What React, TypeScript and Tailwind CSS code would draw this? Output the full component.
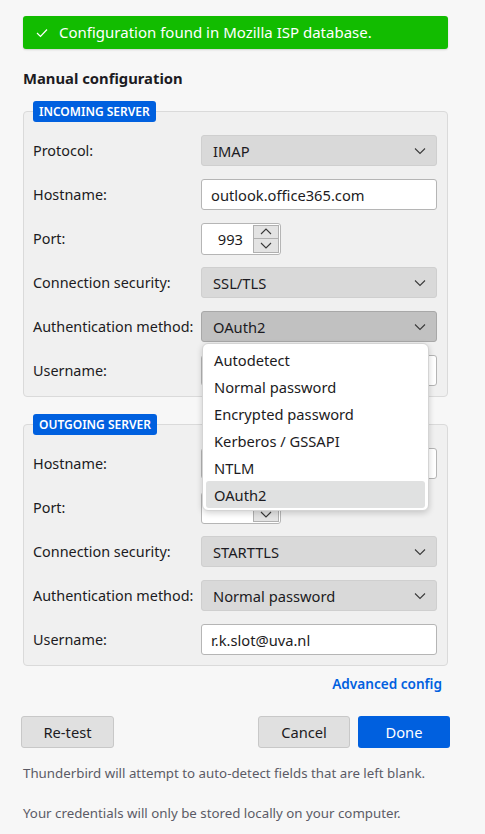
import React from "react";

const font = { fontFamily: '"Noto Sans", "Open Sans", sans-serif' };

function Chevron({ className = "" }: { className?: string }) {
  return (
    <svg width="12" height="8" viewBox="0 0 12 8" className={className}>
      <path d="M1 1.5 L6 6.5 L11 1.5" fill="none" stroke="#3a3a3a" strokeWidth="1.1" />
    </svg>
  );
}

function Select({ value, active = false }: { value: string; active?: boolean }) {
  return (
    <div
      className={`flex h-[31px] w-[236px] items-center justify-between rounded-[3px] border pl-[11px] pr-[10px] text-[14.7px] text-[#1c1b22] ${
        active ? "border-[#a8a8a8] bg-[#c1c1c1]" : "border-[#cfcfcf] bg-[#d9d9d9]"
      }`}
    >
      <span>{value}</span>
      <Chevron />
    </div>
  );
}

function TextInput({ value }: { value: string }) {
  return (
    <div className="flex h-[31px] w-[236px] items-center rounded-[3px] border border-[#b5b5b5] bg-white pl-[9px] text-[14.7px] text-[#1c1b22]">
      {value}
    </div>
  );
}

function PortInput({ value }: { value: string }) {
  return (
    <div className="flex h-[32px] w-[80px] overflow-hidden rounded-[3px] border border-[#b5b5b5] bg-white">
      <div className="flex flex-1 items-center justify-end pr-[10px] text-[14.7px] text-[#1c1b22]">{value}</div>
      <div className="my-[1px] mr-[1px] flex w-[26px] flex-col">
        <div className="flex flex-1 items-center justify-center border border-[#b0b0b0] bg-[#e3e3e3]">
          <svg width="12" height="7" viewBox="0 0 12 7">
            <path d="M1 6 L6 1 L11 6" fill="none" stroke="#3a3a3a" strokeWidth="1.1" />
          </svg>
        </div>
        <div className="flex flex-1 items-center justify-center border border-t-0 border-[#b0b0b0] bg-[#e3e3e3]">
          <svg width="12" height="7" viewBox="0 0 12 7">
            <path d="M1 1 L6 6 L11 1" fill="none" stroke="#3a3a3a" strokeWidth="1.1" />
          </svg>
        </div>
      </div>
    </div>
  );
}

function Row({ label, children }: { label: string; children: React.ReactNode }) {
  return (
    <div className="relative flex h-[31px] items-center">
      <div className="w-[168px] text-[14.4px] text-[#1c1b22]">{label}</div>
      {children}
    </div>
  );
}

function Fieldset({ title, children }: { title: string; children: React.ReactNode }) {
  return (
    <div className="relative rounded-[4px] border border-[#dadada] bg-[#f0f0f0] pb-[10px] pl-[9px] pr-[9px] pt-[23px]">
      <div className="absolute left-[9px] top-[-11px] flex h-[21px] items-center rounded-[3px] bg-[#0060df] px-[6px] text-[12px] font-semibold text-white">
        {title}
      </div>
      <div className="flex flex-col gap-[13px]">{children}</div>
    </div>
  );
}

const menuItems = ["Autodetect", "Normal password", "Encrypted password", "Kerberos / GSSAPI", "NTLM", "OAuth2"];

export default function App() {
  return (
    <div className="min-h-[834px] w-[485px] bg-[#f7f7f7]" style={font}>
      <div className="pl-[23px] pr-[37px] pt-[16px]">
        <div className="flex h-[33px] items-center rounded-[3px] bg-[#12bc00] pl-[13px] text-[15px] text-white shadow-[0_1px_2px_rgba(0,0,0,0.15)]">
          <svg width="12" height="10" viewBox="0 0 12 10" className="mr-[11px]">
            <path d="M1 5 L4.5 8.5 L11 1.5" fill="none" stroke="white" strokeWidth="1.2" />
          </svg>
          Configuration found in Mozilla ISP database.
        </div>

        <div className="mt-[18px] text-[14.8px] font-bold text-[#1c1b22]">Manual configuration</div>

        <div className="mt-[22px]">
          <Fieldset title="INCOMING SERVER">
            <Row label="Protocol:">
              <Select value="IMAP" />
            </Row>
            <Row label="Hostname:">
              <TextInput value="outlook.office365.com" />
            </Row>
            <Row label="Port:">
              <PortInput value="993" />
            </Row>
            <Row label="Connection security:">
              <Select value="SSL/TLS" />
            </Row>
            <Row label="Authentication method:">
              <div className="relative">
                <Select value="OAuth2" active />
                <div className="absolute left-[1px] top-[32px] z-10 w-[227px] rounded-[6px] border border-[#d4d4d4] bg-white px-[3px] py-[2px] shadow-[0_2px_6px_rgba(0,0,0,0.18)]">
                  {menuItems.map((m) => (
                    <div
                      key={m}
                      className={`flex h-[27px] items-center rounded-[3px] pl-[8px] text-[14.7px] text-[#1c1b22] ${
                        m === "OAuth2" ? "bg-[#e0e1e1]" : ""
                      }`}
                    >
                      {m}
                    </div>
                  ))}
                </div>
              </div>
            </Row>
            <Row label="Username:">
              <TextInput value="" />
            </Row>
          </Fieldset>
        </div>

        <div className="mt-[27px]">
          <Fieldset title="OUTGOING SERVER">
            <Row label="Hostname:">
              <TextInput value="" />
            </Row>
            <Row label="Port:">
              <PortInput value="" />
            </Row>
            <Row label="Connection security:">
              <Select value="STARTTLS" />
            </Row>
            <Row label="Authentication method:">
              <Select value="Normal password" />
            </Row>
            <Row label="Username:">
              <TextInput value="r.k.slot@uva.nl" />
            </Row>
          </Fieldset>
        </div>

        <div className="mt-[8px] flex justify-end pr-[6px]">
          <span className="text-[13.6px] font-semibold text-[#0060df]">Advanced config</span>
        </div>
      </div>

      <div className="mt-[21px] flex pl-[21px] pr-[35px]">
        <button className="h-[32px] w-[93px] rounded-[3px] border border-[#c8c8c8] bg-[#e0e0e0] text-[14.7px] text-[#1c1b22]">
          Re-test
        </button>
        <div className="flex-1" />
        <button className="h-[32px] w-[92px] rounded-[3px] border border-[#c8c8c8] bg-[#e0e0e0] text-[14.7px] text-[#1c1b22]">
          Cancel
        </button>
        <button className="ml-[8px] h-[32px] w-[92px] rounded-[3px] bg-[#0060df] text-[14.7px] text-white">
          Done
        </button>
      </div>

      <div className="pl-[23px] pt-[15px] text-[13.3px] text-[#5b5b66]">
        <div className="leading-[20px]">Thunderbird will attempt to auto-detect fields that are left blank.</div>
        <div className="mt-[20px] leading-[20px]">Your credentials will only be stored locally on your computer.</div>
      </div>
    </div>
  );
}
